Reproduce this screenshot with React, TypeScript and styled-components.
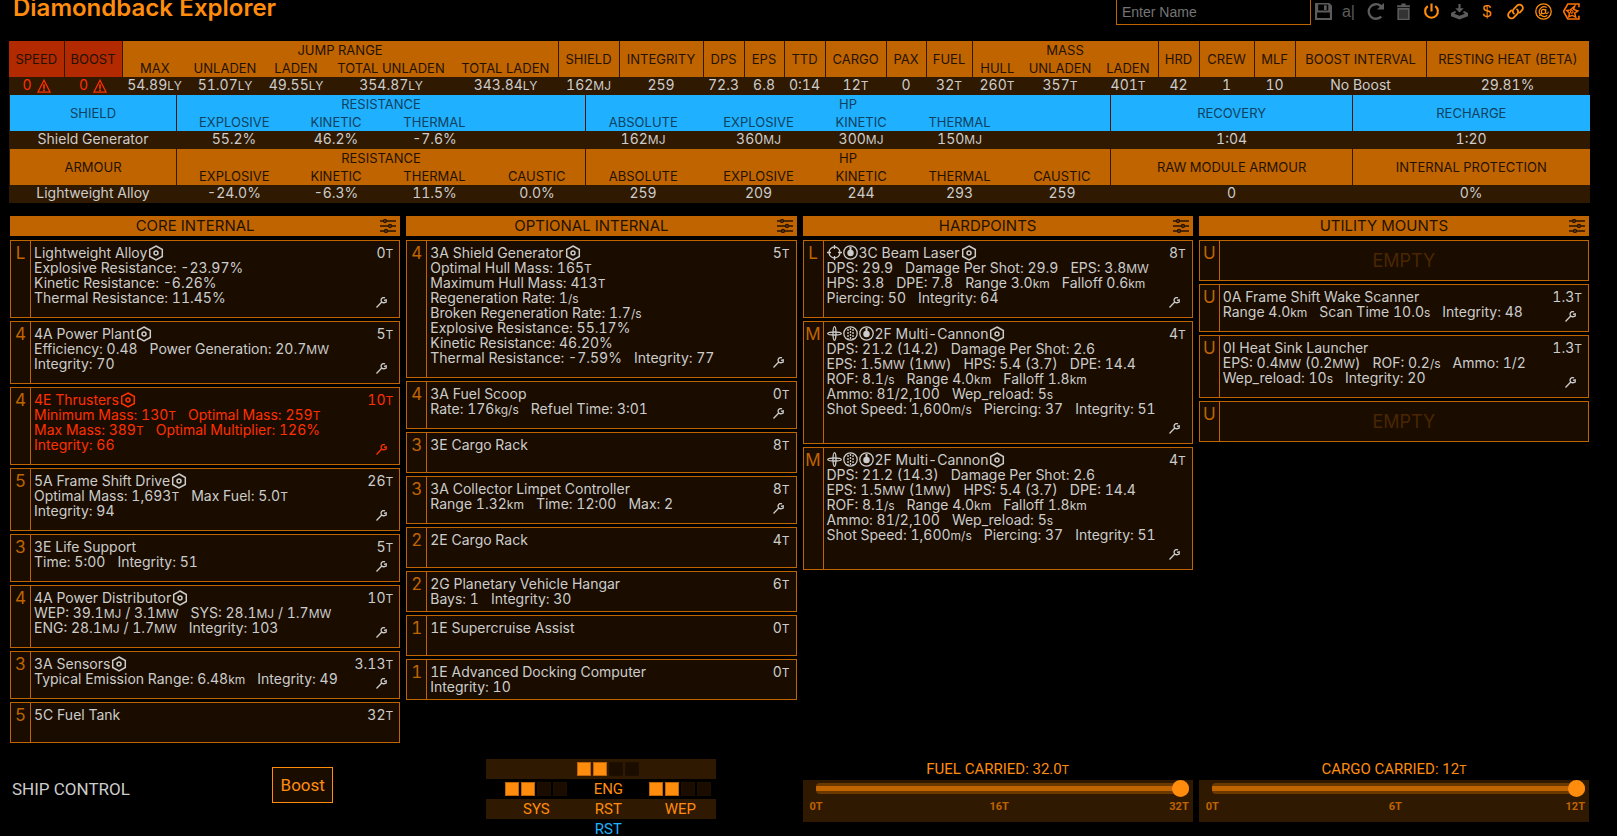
import React from 'react';
import styled, { createGlobalStyle, css } from 'styled-components';

const c = {
  primary: '#ff8c0d',
  dim: '#c06400',
  bg: '#2f1900',
  card: '#1a0d00',
  text: '#cccccc',
  red: '#ff3000',
  redDim: '#b32a00',
  blue: '#1fb0ff',
  off: '#5c5c5c',
};

const Global = createGlobalStyle`
  * { box-sizing: border-box; }
  body {
    margin: 0;
    background: #000;
    color: ${c.text};
    font: 14px/15px Inter, "Liberation Sans", sans-serif;
    font-variant-numeric: tabular-nums;
  }
  button { font: inherit; color: inherit; background: none; border: 0; padding: 0; cursor: pointer; }
`;

const Page = styled.div`
  padding: 0 28px 0 9px;
`;

/* ---------- header ---------- */
const Header = styled.header`
  display: flex;
  align-items: flex-start;
  justify-content: space-between;
  height: 41px;
  padding-left: 4px;
`;
const Title = styled.h1`
  margin: 0;
  font-size: 24px;
  line-height: 16px;
  font-weight: 600;
  color: ${c.primary};
`;
const Tools = styled.div`
  display: flex;
  align-items: center;
  height: 27px;
  margin-top: -2px;
  padding-right: 4px;
`;
const NameInput = styled.input`
  width: 195px;
  height: 27px;
  padding: 0 5px;
  border: 1px solid ${c.dim};
  border-radius: 0;
  background: #000;
  color: ${c.primary};
  font: 14px "Liberation Sans", sans-serif;
  &::placeholder { color: #757575; opacity: 1; }
`;
const ToolButton = styled.button<{ $on?: boolean; $narrow?: boolean }>`
  display: flex;
  align-items: center;
  justify-content: center;
  width: ${p => (p.$narrow ? 25 : 28)}px;
  height: 27px;
  color: ${p => (p.$on ? c.primary : c.off)};
`;
const GlyphText = styled.span`
  font: 16px/18px "Liberation Sans", sans-serif;
`;

const svg = { width: 17, height: 17, viewBox: '0 0 32 32', fill: 'currentColor', 'aria-hidden': true } as const;

const SaveIcon = () => (
  <svg {...svg}>
    <path fillRule="evenodd" d="M0 0h27l5 5v27H0zM6 3v11h19V3zM17 4h5v9h-5zM4 18v10h24V18z" />
  </svg>
);
const ReloadIcon = () => (
  <svg {...svg}>
    <path d="M32 12H19l5-5a11.5 11.5 0 1 0 1 17l3.500 3.200A16 16 0 1 1 27.300 3.700L32 0z" />
  </svg>
);
const BinIcon = () => (
  <svg {...svg}>
    <path d="M4 4h8V1h8v3h8v4H4z" />
    <path d="M6 11h20v20H6z" fill="#333" stroke="currentColor" strokeWidth="3" />
  </svg>
);
const PowerIcon = () => (
  <svg {...svg}>
    <path d="M14 1h4v15h-4z" />
    <path d="M9 6a12 12 0 1 0 14 0" fill="none" stroke="currentColor" strokeWidth="4" />
  </svg>
);
const ImportIcon = () => (
  <svg {...svg}>
    <path d="M14 2h4v8h6l-8 8-8-8h6z" />
    <path d="M7 15l-7 4v6l16 6 16-6v-6l-7-4-3 2 4 3-10 4-10-4 4-3z" />
  </svg>
);
const LinkIcon = () => (
  <svg {...svg} fill="none" stroke="currentColor" strokeWidth="3.500" strokeLinecap="round">
    <path d="M13 20a6 6 0 0 1 0-9l6-6a6.300 6.300 0 0 1 9 9l-4 4" />
    <path d="M19 12a6 6 0 0 1 0 9l-6 6a6.300 6.300 0 0 1-9-9l4-4" />
  </svg>
);
const OrbisIcon = () => (
  <svg {...svg} fill="none" stroke="currentColor">
    <circle cx="16" cy="16" r="14.500" strokeWidth="2.500" />
    <path d="M22 8.500A9 9 0 1 0 23 23" strokeWidth="2.200" />
    <circle cx="16" cy="16" r="4" strokeWidth="2.200" />
    <path d="M20.500 11l-.5 7c1 3 5 2 5-2M8 24l5-5" strokeWidth="2" />
  </svg>
);
const CoriolisIcon = () => (
  <svg {...svg} fill="none" stroke="#ff7100">
    <path d="M30 8V2H9L1 16l8 14h21v-6" strokeWidth="3" />
    <path d="M22 6l-2 6 8 3-6 4 2 8-7-4-6 3 1-7-5-5 7-1z" strokeWidth="2.800" />
    <circle cx="16.500" cy="16.500" r="2.500" strokeWidth="2" />
  </svg>
);

/* ---------- summary tables ---------- */
const Table = styled.table`
  width: 100%;
  table-layout: fixed;
  border-collapse: collapse;
  text-align: center;
  background: ${c.bg};
`;
const Row = styled.tr`
  height: 18px;
`;
type Tone = 'orange' | 'blue' | 'red';
const Th = styled.th<{ $tone?: Tone; $div?: boolean }>`
  padding: 0;
  height: 18px;
  font-size: 13px;
  line-height: 18px;
  font-weight: 400;
  white-space: nowrap;
  color: ${p => (p.$tone === 'blue' ? '#0e4260' : '#241200')};
  background: ${p => (p.$tone === 'blue' ? c.blue : p.$tone === 'red' ? c.redDim : c.dim)};
  ${p => p.$div && css`border-left: 1px solid ${c.bg};`}
`;
const Td = styled.td<{ $warn?: boolean }>`
  padding: 0;
  height: 18px;
  line-height: 16px;
  vertical-align: top;
  white-space: nowrap;
  color: ${p => (p.$warn ? c.red : c.text)};
  svg { vertical-align: -3px; margin-left: 5px; }
`;
const Unit = styled.span`
  font-size: 12px;
  line-height: 0;
`;

/** Turns "12{T}" into a value followed by a small unit. */
const Val = ({ v }: { v: string }) => (
  <>
    {v.split(/(\{[^}]+\})/).map((s, i) =>
      s.startsWith('{') ? <Unit key={i}>{s.slice(1, -1)}</Unit> : <React.Fragment key={i}>{s}</React.Fragment>,
    )}
  </>
);

const WarningIcon = () => (
  <svg width="14" height="14" viewBox="0 0 32 32" fill="none" stroke="currentColor" role="img" aria-label="warning">
    <path d="M16 3L30 30H2z" strokeWidth="3" />
    <path d="M16 12v10M16 24v4" strokeWidth="4" />
  </svg>
);

const Cols = ({ widths }: { widths: number[] }) => (
  <colgroup>{widths.map((w, i) => <col key={i} width={w} />)}</colgroup>
);

const summaryCols = [55, 58, 65, 76, 66, 124, 105, 61, 84, 41, 40, 41, 61, 40, 46, 50, 76, 60, 41, 55, 41, 131, 163];
const summaryVals = [
  '54.89{LY}', '51.07{LY}', '49.55{LY}', '354.87{LY}', '343.84{LY}', '162{MJ}', '259', '72.3', '6.8', '0:14',
  '12{T}', '0', '32{T}', '260{T}', '357{T}', '401{T}', '42', '1', '10', 'No Boost', '29.81%',
];

const Summary = () => (
  <Table>
    <Cols widths={summaryCols} />
    <thead>
      <Row>
        <Th rowSpan={2} $tone="red">SPEED</Th>
        <Th rowSpan={2} $tone="red" $div>BOOST</Th>
        <Th colSpan={5} $div>JUMP RANGE</Th>
        {['SHIELD', 'INTEGRITY', 'DPS', 'EPS', 'TTD', 'CARGO', 'PAX', 'FUEL'].map(h => (
          <Th key={h} rowSpan={2} $div>{h}</Th>
        ))}
        <Th colSpan={3} $div>MASS</Th>
        {['HRD', 'CREW', 'MLF', 'BOOST INTERVAL', 'RESTING HEAT (BETA)'].map(h => (
          <Th key={h} rowSpan={2} $div>{h}</Th>
        ))}
      </Row>
      <Row>
        {['MAX', 'UNLADEN', 'LADEN', 'TOTAL UNLADEN', 'TOTAL LADEN', 'HULL', 'UNLADEN', 'LADEN'].map((h, i) => (
          <Th key={i} $div={i === 0 || i === 5}>{h}</Th>
        ))}
      </Row>
    </thead>
    <tbody>
      <Row>
        <Td $warn>0<WarningIcon /></Td>
        <Td $warn>0<WarningIcon /></Td>
        {summaryVals.map((v, i) => <Td key={i}><Val v={v} /></Td>)}
      </Row>
    </tbody>
  </Table>
);

interface DefenceProps {
  tone: Tone;
  title: string;
  ends: [string, string];
  caustic: boolean;
  values: string[];
}
const Defence = ({ tone, title, ends, caustic, values }: DefenceProps) => {
  const last = caustic ? 'CAUSTIC' : '';
  const subs = ['EXPLOSIVE', 'KINETIC', 'THERMAL', last, 'ABSOLUTE', 'EXPLOSIVE', 'KINETIC', 'THERMAL', last];
  return (
    <>
      <thead>
        <Row>
          <Th rowSpan={2} $tone={tone} $div>{title}</Th>
          <Th colSpan={4} $tone={tone} $div>RESISTANCE</Th>
          <Th colSpan={5} $tone={tone} $div>HP</Th>
          {ends.map(e => <Th key={e} rowSpan={2} $tone={tone} $div>{e}</Th>)}
        </Row>
        <Row>
          {subs.map((s, i) => <Th key={i} $tone={tone} $div={i === 0 || i === 4}>{s}</Th>)}
        </Row>
      </thead>
      <tbody>
        <Row>{values.map((v, i) => <Td key={i}><Val v={v} /></Td>)}</Row>
      </tbody>
    </>
  );
};

/* ---------- slots ---------- */
const Groups = styled.main`
  display: grid;
  grid-template-columns: repeat(4, minmax(0, 1fr));
  gap: 6px;
  margin: 13px 0 0 1px;
`;
const Group = styled.section`
  display: flex;
  flex-direction: column;
  gap: 3px;
`;
const GroupHead = styled.header`
  display: grid;
  grid-template-columns: 1fr 16px;
  align-items: center;
  height: 20px;
  padding-right: 4px;
  margin-bottom: 1px;
  background: ${c.dim};
  color: #241200;
  button { height: 14px; }
`;
const GroupTitle = styled.h2`
  margin: 0;
  font-size: 15px;
  line-height: 20px;
  font-weight: 400;
  text-align: center;
`;
const Card = styled.article<{ $warn?: boolean }>`
  display: grid;
  grid-template-columns: 20px 1fr;
  min-height: 41px;
  border: 1px solid ${c.dim};
  background: ${c.card};
  color: ${p => (p.$warn ? c.red : c.text)};
`;
const Size = styled.div`
  padding-top: 4px;
  border-right: 1px solid ${c.dim};
  font-size: 17px;
  line-height: 17px;
  text-align: center;
  color: ${c.dim};
`;
const Body = styled.div<{ $mod: boolean }>`
  padding: 4px 6px ${p => (p.$mod ? 12 : 5)}px 3px;
  white-space: nowrap;
`;
const NameRow = styled.div`
  display: flex;
  justify-content: space-between;
  height: 15px;
`;
const Name = styled.span`
  display: flex;
  align-items: center;
  gap: 1px;
`;
const DetailRow = styled.div<{ $wrap?: boolean }>`
  display: flex;
  flex-direction: ${p => (p.$wrap ? 'column' : 'row')};
  justify-content: space-between;
  align-items: flex-end;
`;
const Lines = styled.div`
  flex: 1;
  align-self: flex-start;
`;
const Line = styled.div`
  display: flex;
  gap: 12px;
  height: 15px;
`;
const ModButton = styled.button`
  display: flex;
  align-items: flex-start;
  height: 15px;
  padding: 7px 6px 0 0;
  flex: none;
`;
const Empty = styled.div`
  align-self: center;
  font-size: 18px;
  text-align: center;
  color: #4a2600;
`;

const SlidersIcon = () => (
  <svg width="16" height="14" viewBox="0 0 16 14" fill="none" stroke="#241200" aria-hidden="true">
    <path d="M0 2h16M0 7h16M0 12h16" strokeWidth="1.500" />
    <g fill={c.dim} strokeWidth="1.500">
      <circle cx="5" cy="2" r="1.400" /><circle cx="10" cy="7" r="1.400" /><circle cx="6" cy="12" r="1.400" />
    </g>
  </svg>
);
const WrenchIcon = () => (
  <svg width="11" height="11" viewBox="0 0 11 11" fill="none" stroke="currentColor" strokeWidth="1.300" aria-hidden="true">
    <path d="M.5 10.500L5.500 5.300M9 .9A2.600 2.600 0 1 0 8.500 5.600L10.200 5V2.800L8 3.400" />
  </svg>
);
const EngineeredIcon = () => (
  <svg width="16" height="16" viewBox="0 0 16 16" fill="none" stroke="currentColor" strokeWidth="1.500" role="img" aria-label="engineered">
    <path d="M8 1l6.300 3.500v7L8 15l-6.300-3.500v-7z" />
    <circle cx="8" cy="8" r="2" />
  </svg>
);
const MountIcon = ({ kind }: { kind: string }) => (
  <svg width="15" height="15" viewBox="0 0 15 15" fill="none" stroke="currentColor" strokeWidth="1.300" aria-hidden="true">
    {kind === 'fixed' && <><circle cx="7.500" cy="7.500" r="5.500" /><path d="M7.500 0v4M7.500 11v4M0 7.500h4M11 7.500h4" /></>}
    {kind === 'gimbal' && <><ellipse cx="7.500" cy="7.500" rx="6.800" ry="1.500" /><ellipse cx="7.500" cy="7.500" rx="1.500" ry="6.800" /></>}
    {kind === 'thermal' && <><circle cx="7.500" cy="7.500" r="6.700" /><circle cx="7.500" cy="8" r="2.600" fill="currentColor" /><path d="M7.500 2v5" strokeWidth="2" /></>}
    {kind === 'kinetic' && <><circle cx="7.500" cy="7.500" r="6.700" /><path d="M5 3v10M7.500 2v12M10 3v10" strokeDasharray="2 1" /></>}
  </svg>
);

interface Slot {
  size: string;
  name?: string;
  mass?: string;
  icons?: string[];
  eng?: boolean;
  mod?: boolean;
  warn?: boolean;
  wrap?: boolean;
  lines?: string[][];
}

const SlotCard = ({ s }: { s: Slot }) => (
  <Card $warn={s.warn}>
    <Size>{s.size}</Size>
    {s.name ? (
      <Body $mod={!!s.mod}>
        <NameRow>
          <Name>
            {s.icons?.map(k => <MountIcon key={k} kind={k} />)}
            {s.name}
            {s.eng && <EngineeredIcon />}
          </Name>
          <span><Val v={s.mass ?? ''} /></span>
        </NameRow>
        {s.lines && (
          <DetailRow $wrap={s.wrap}>
            <Lines>
              {s.lines.map((l, i) => (
                <Line key={i}>{l.map(t => <span key={t}><Val v={t} /></span>)}</Line>
              ))}
            </Lines>
            {s.mod && <ModButton aria-label={`Modify ${s.name}`}><WrenchIcon /></ModButton>}
          </DetailRow>
        )}
      </Body>
    ) : (
      <Empty>EMPTY</Empty>
    )}
  </Card>
);

const cannon = (alt: string): Slot => ({
  size: 'M', name: '2F Multi-Cannon', mass: '4{T}', icons: ['gimbal', 'kinetic', 'thermal'], eng: true, mod: true, wrap: true,
  lines: [
    [`DPS: 21.2 (${alt})`, 'Damage Per Shot: 2.6'],
    ['EPS: 1.5{MW} (1{MW})', 'HPS: 5.4 (3.7)', 'DPE: 14.4'],
    ['ROF: 8.1{/s}', 'Range 4.0{km}', 'Falloff 1.8{km}'],
    ['Ammo: 81/2,100', 'Wep_reload: 5{s}'],
    ['Shot Speed: 1,600{m/s}', 'Piercing: 37', 'Integrity: 51'],
  ],
});

const groups: { title: string; slots: Slot[] }[] = [
  {
    title: 'CORE INTERNAL',
    slots: [
      { size: 'L', name: 'Lightweight Alloy', mass: '0{T}', eng: true, mod: true, lines: [['Explosive Resistance: -23.97%'], ['Kinetic Resistance: -6.26%'], ['Thermal Resistance: 11.45%']] },
      { size: '4', name: '4A Power Plant', mass: '5{T}', eng: true, mod: true, lines: [['Efficiency: 0.48', 'Power Generation: 20.7{MW}'], ['Integrity: 70']] },
      { size: '4', name: '4E Thrusters', mass: '10{T}', eng: true, mod: true, warn: true, lines: [['Minimum Mass: 130{T}', 'Optimal Mass: 259{T}'], ['Max Mass: 389{T}', 'Optimal Multiplier: 126%'], ['Integrity: 66']] },
      { size: '5', name: '5A Frame Shift Drive', mass: '26{T}', eng: true, mod: true, lines: [['Optimal Mass: 1,693{T}', 'Max Fuel: 5.0{T}'], ['Integrity: 94']] },
      { size: '3', name: '3E Life Support', mass: '5{T}', mod: true, lines: [['Time: 5:00', 'Integrity: 51']] },
      { size: '4', name: '4A Power Distributor', mass: '10{T}', eng: true, mod: true, lines: [['WEP: 39.1{MJ} / 3.1{MW}', 'SYS: 28.1{MJ} / 1.7{MW}'], ['ENG: 28.1{MJ} / 1.7{MW}', 'Integrity: 103']] },
      { size: '3', name: '3A Sensors', mass: '3.13{T}', eng: true, mod: true, lines: [['Typical Emission Range: 6.48{km}', 'Integrity: 49']] },
      { size: '5', name: '5C Fuel Tank', mass: '32{T}' },
    ],
  },
  {
    title: 'OPTIONAL INTERNAL',
    slots: [
      { size: '4', name: '3A Shield Generator', mass: '5{T}', eng: true, mod: true, lines: [['Optimal Hull Mass: 165{T}'], ['Maximum Hull Mass: 413{T}'], ['Regeneration Rate: 1{/s}'], ['Broken Regeneration Rate: 1.7{/s}'], ['Explosive Resistance: 55.17%'], ['Kinetic Resistance: 46.20%'], ['Thermal Resistance: -7.59%', 'Integrity: 77']] },
      { size: '4', name: '3A Fuel Scoop', mass: '0{T}', mod: true, lines: [['Rate: 176{kg/s}', 'Refuel Time: 3:01']] },
      { size: '3', name: '3E Cargo Rack', mass: '8{T}' },
      { size: '3', name: '3A Collector Limpet Controller', mass: '8{T}', mod: true, lines: [['Range 1.32{km}', 'Time: 12:00', 'Max: 2']] },
      { size: '2', name: '2E Cargo Rack', mass: '4{T}' },
      { size: '2', name: '2G Planetary Vehicle Hangar', mass: '6{T}', lines: [['Bays: 1', 'Integrity: 30']] },
      { size: '1', name: '1E Supercruise Assist', mass: '0{T}' },
      { size: '1', name: '1E Advanced Docking Computer', mass: '0{T}', lines: [['Integrity: 10']] },
    ],
  },
  {
    title: 'HARDPOINTS',
    slots: [
      { size: 'L', name: '3C Beam Laser', mass: '8{T}', icons: ['fixed', 'thermal'], eng: true, mod: true, lines: [['DPS: 29.9', 'Damage Per Shot: 29.9', 'EPS: 3.8{MW}'], ['HPS: 3.8', 'DPE: 7.8', 'Range 3.0{km}', 'Falloff 0.6{km}'], ['Piercing: 50', 'Integrity: 64']] },
      cannon('14.2'),
      cannon('14.3'),
    ],
  },
  {
    title: 'UTILITY MOUNTS',
    slots: [
      { size: 'U' },
      { size: 'U', name: '0A Frame Shift Wake Scanner', mass: '1.3{T}', mod: true, lines: [['Range 4.0{km}', 'Scan Time 10.0{s}', 'Integrity: 48']] },
      { size: 'U', name: '0I Heat Sink Launcher', mass: '1.3{T}', mod: true, lines: [['EPS: 0.4{MW} (0.2{MW})', 'ROF: 0.2{/s}', 'Ammo: 1/2'], ['Wep_reload: 10{s}', 'Integrity: 20']] },
      { size: 'U' },
    ],
  },
];

/* ---------- ship control ---------- */
const Control = styled.footer`
  display: grid;
  grid-template-columns: repeat(4, minmax(0, 1fr));
  column-gap: 6px;
  margin: 16px 0 0 1px;
`;
const ControlLeft = styled.div`
  display: flex;
  align-items: flex-start;
  justify-content: space-between;
  padding: 8px 67px 0 2px;
`;
const ControlTitle = styled.h2`
  margin: 12px 0 0;
  font-size: 17px;
  line-height: 20px;
  font-weight: 400;
  font-family: Roboto, sans-serif;
`;
const BoostButton = styled.button`
  width: 61px;
  height: 36px;
  border: 1px solid ${c.primary};
  background: ${c.card};
  color: ${c.primary};
  font: 17px Roboto, sans-serif;
`;
const Pips = styled.div`
  justify-self: center;
  align-self: start;
  width: 230px;
  color: ${c.primary};
  font: 15px/20px Roboto, sans-serif;
`;
const PipRow = styled.div<{ $band?: boolean }>`
  display: grid;
  grid-template-columns: repeat(3, 72px);
  justify-items: center;
  align-items: center;
  height: 20px;
  padding-left: 14px;
  background: ${p => (p.$band ? c.bg : 'transparent')};
`;
const PipSet = styled.button<{ $mid?: boolean }>`
  ${p => p.$mid && css`grid-column: 2;`}
  display: flex;
  gap: 2px;
`;
const Pip = styled.span<{ $on: boolean }>`
  width: 14px;
  height: 14px;
  border: 1px solid ${p => (p.$on ? c.dim : '#1e1000')};
  background: ${p => (p.$on ? c.primary : c.card)};
`;
const PipLabel = styled.button<{ $multi?: boolean; $mid?: boolean }>`
  ${p => p.$mid && css`grid-column: 2;`}
  line-height: 18px;
  color: ${p => (p.$multi ? c.blue : c.primary)};
`;
const PipMarks = () => <>{[true, true, false, false].map((on, i) => <Pip key={i} $on={on} />)}</>;

const SliderField = styled.div`
  color: ${c.primary};
`;
const SliderLabel = styled.label`
  display: block;
  font: 15px/20px Roboto, sans-serif;
  text-align: center;
`;
const SliderBox = styled.div`
  height: 42px;
  margin-top: 1px;
  padding: 0 4px 0 13px;
  background: ${c.bg};
`;
const Range = styled.input`
  display: block;
  width: 100%;
  height: 17px;
  margin: 0;
  appearance: none;
  background: none;
  &::-webkit-slider-runnable-track {
    height: 11px;
    border-radius: 4px;
    background: linear-gradient(#6b3800 3px, ${c.dim} 3px, ${c.dim} 8px, #6b3800 8px);
  }
  &::-webkit-slider-thumb {
    appearance: none;
    width: 17px;
    height: 17px;
    margin-top: -3px;
    border-radius: 50%;
    background: ${c.primary};
  }
`;
const Ticks = styled.div`
  display: grid;
  grid-template-columns: 1fr 1fr 1fr;
  margin: 3px 0 0 -6px;
  font: bold 11px/14px Roboto, sans-serif;
  color: ${c.dim};
  span:nth-child(2) { text-align: center; }
  span:nth-child(3) { text-align: right; }
`;

const Slider = ({ id, label, max, ticks }: { id: string; label: string; max: number; ticks: string[] }) => (
  <SliderField>
    <SliderLabel htmlFor={id}><Val v={label} /></SliderLabel>
    <SliderBox>
      <Range id={id} type="range" min={0} max={max} defaultValue={max} />
      <Ticks>{ticks.map(t => <span key={t}>{t}</span>)}</Ticks>
    </SliderBox>
  </SliderField>
);

export default function App() {
  return (
    <Page>
      <Global />
      <Header>
        <Title>Diamondback Explorer</Title>
        <Tools>
          <NameInput aria-label="Build name" placeholder="Enter Name" />
          <ToolButton $narrow aria-label="Save"><SaveIcon /></ToolButton>
          <ToolButton $narrow aria-label="Rename"><GlyphText>a|</GlyphText></ToolButton>
          <ToolButton aria-label="Reload"><ReloadIcon /></ToolButton>
          <ToolButton aria-label="Delete"><BinIcon /></ToolButton>
          <ToolButton $on aria-label="Reset"><PowerIcon /></ToolButton>
          <ToolButton aria-label="Export"><ImportIcon /></ToolButton>
          <ToolButton $on aria-label="Shopping"><GlyphText>$</GlyphText></ToolButton>
          <ToolButton $on aria-label="Link"><LinkIcon /></ToolButton>
          <ToolButton $on aria-label="Orbis"><OrbisIcon /></ToolButton>
          <ToolButton $on aria-label="Materials"><CoriolisIcon /></ToolButton>
        </Tools>
      </Header>

      <Summary />
      <Table>
        <Cols widths={[167, 115, 89, 108, 97, 115, 116, 89, 108, 97, 242, 237]} />
        <Defence
          tone="blue" title="SHIELD" ends={['RECOVERY', 'RECHARGE']} caustic={false}
          values={['Shield Generator', '55.2%', '46.2%', '-7.6%', '', '162{MJ}', '360{MJ}', '300{MJ}', '150{MJ}', '', '1:04', '1:20']}
        />
        <Defence
          tone="orange" title="ARMOUR" ends={['RAW MODULE ARMOUR', 'INTERNAL PROTECTION']} caustic
          values={['Lightweight Alloy', '-24.0%', '-6.3%', '11.5%', '0.0%', '259', '209', '244', '293', '259', '0', '0%']}
        />
      </Table>

      <Groups>
        {groups.map(g => (
          <Group key={g.title}>
            <GroupHead>
              <GroupTitle>{g.title}</GroupTitle>
              <button aria-label={`${g.title} options`}><SlidersIcon /></button>
            </GroupHead>
            {g.slots.map((s, i) => <SlotCard key={i} s={s} />)}
          </Group>
        ))}
      </Groups>

      <Control>
        <ControlLeft>
          <ControlTitle>SHIP CONTROL</ControlTitle>
          <BoostButton>Boost</BoostButton>
        </ControlLeft>
        <Pips>
          <PipRow $band><PipSet $mid aria-label="Engine pips"><PipMarks /></PipSet></PipRow>
          <PipRow>
            <PipSet aria-label="System pips"><PipMarks /></PipSet>
            <PipLabel>ENG</PipLabel>
            <PipSet aria-label="Weapon pips"><PipMarks /></PipSet>
          </PipRow>
          <PipRow $band>
            <PipLabel>SYS</PipLabel>
            <PipLabel>RST</PipLabel>
            <PipLabel>WEP</PipLabel>
          </PipRow>
          <PipRow><PipLabel $multi $mid>RST</PipLabel></PipRow>
        </Pips>
        <Slider id="fuel" label="FUEL CARRIED: 32.0{T}" max={32} ticks={['0T', '16T', '32T']} />
        <Slider id="cargo" label="CARGO CARRIED: 12{T}" max={12} ticks={['0T', '6T', '12T']} />
      </Control>
    </Page>
  );
}
